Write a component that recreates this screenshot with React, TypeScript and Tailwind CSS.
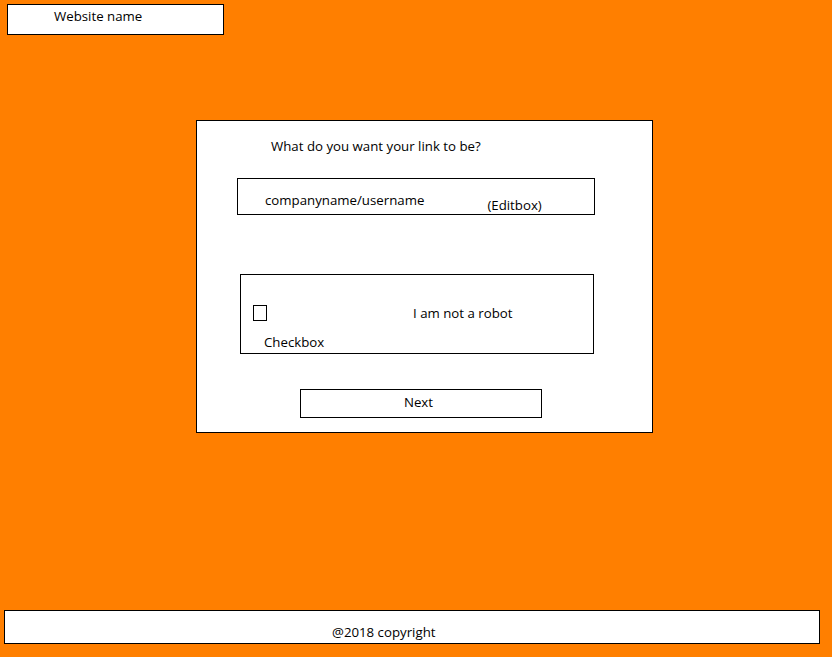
export default function App() {
  return (
    <div
      className="flex flex-col h-[657px] w-[832px] bg-[#ff7f00] text-[13.25px] text-black overflow-hidden"
      style={{ fontFamily: '"Open Sans", "Noto Sans", sans-serif' }}
    >
      {/* Header */}
      <div className="ml-[7px] mt-[4px] w-[217px] h-[31px] border border-black bg-white flex items-center pl-[46px] pb-[5px]">
        Website name
      </div>

      {/* Card */}
      <div className="ml-[196px] mt-[85px] w-[457px] h-[313px] border border-black bg-white flex flex-col">
        <p className="ml-[74px] mt-[16px] leading-[18px]">What do you want your link to be?</p>

        <div className="ml-[40px] mt-[23px] w-[358px] h-[37px] border border-black flex">
          <span className="ml-[27px] mt-[12px] leading-[18px]">companyname/username</span>
          <span className="ml-[63px] mt-[17px] leading-[18px]">(Editbox)</span>
        </div>

        <div className="ml-[43px] mt-[59px] w-[354px] h-[80px] border border-black flex flex-col">
          <div className="flex items-center mt-[29px]">
            <div className="ml-[12px] w-[14px] h-[16px] border border-black" />
            <span className="ml-[146px] leading-[18px]">I am not a robot</span>
          </div>
          <span className="ml-[23px] mt-[11px] leading-[18px]">Checkbox</span>
        </div>

        <button className="ml-[103px] mt-[35px] w-[242px] h-[29px] border border-black flex items-center justify-center pb-[2px] pr-[5px]">
          Next
        </button>
      </div>

      {/* Footer */}
      <footer className="mt-auto mb-[13px] ml-[4px] w-[816px] h-[34px] border border-black bg-white flex items-end pb-[2px]">
        <span className="ml-[327px] leading-[18px]">@2018 copyright</span>
      </footer>
    </div>
  );
}
